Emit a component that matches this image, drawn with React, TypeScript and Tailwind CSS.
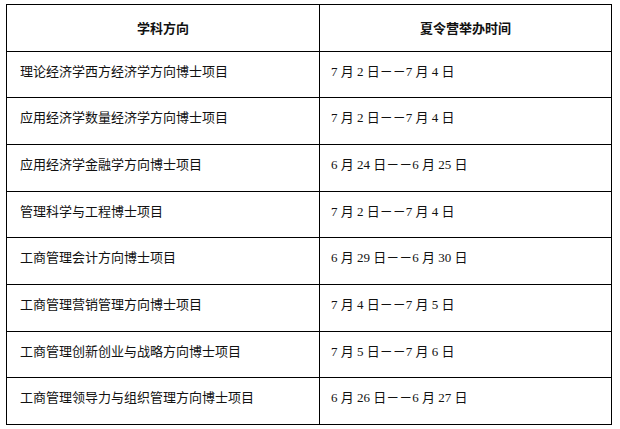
import React from "react"

const rows: { name: string; from: string; to: string; h: string }[] = [
  { name: "理论经济学西方经济学方向博士项目", from: "7 月 2 日", to: "7 月 4 日", h: "h-[46px]" },
  { name: "应用经济学数量经济学方向博士项目", from: "7 月 2 日", to: "7 月 4 日", h: "h-[47px]" },
  { name: "应用经济学金融学方向博士项目", from: "6 月 24 日", to: "6 月 25 日", h: "h-[47px]" },
  { name: "管理科学与工程博士项目", from: "7 月 2 日", to: "7 月 4 日", h: "h-[46px]" },
  { name: "工商管理会计方向博士项目", from: "6 月 29 日", to: "6 月 30 日", h: "h-[47px]" },
  { name: "工商管理营销管理方向博士项目", from: "7 月 4 日", to: "7 月 5 日", h: "h-[47px]" },
  { name: "工商管理创新创业与战略方向博士项目", from: "7 月 5 日", to: "7 月 6 日", h: "h-[46px]" },
  { name: "工商管理领导力与组织管理方向博士项目", from: "6 月 26 日", to: "6 月 27 日", h: "h-[47px]" },
]

const cjk = "font-['Noto_Sans_CJK_SC',sans-serif]"
const dateFont = "font-['Liberation_Serif','Noto_Sans_CJK_SC',serif]"

export default function App() {
  return (
    <div className="min-h-screen bg-white pl-[6px] pt-[4px] text-[#111]">
      <div className="grid w-[606px] grid-cols-[313px_292px] border-l border-t border-black">
        {/* Header */}
        <div
          className={`flex h-[47px] items-center justify-center border-b border-r border-black text-[13px] font-bold ${cjk}`}
        >
          学科方向
        </div>
        <div
          className={`flex h-[47px] items-center justify-center border-b border-r border-black text-[13px] font-bold ${cjk}`}
        >
          夏令营举办时间
        </div>

        {/* Body */}
        {rows.map((r) => (
          <React.Fragment key={r.name}>
            <div
              className={`${r.h} border-b border-r border-black pl-[13px] pt-[9px] text-[13px] leading-[20px] ${cjk}`}
            >
              {r.name}
            </div>
            <div
              className={`${r.h} border-b border-r border-black pl-[11px] pt-[9px] text-[13px] leading-[20px] ${dateFont}`}
            >
              {r.from}
              <span className={cjk}>－－</span>
              {r.to}
            </div>
          </React.Fragment>
        ))}
      </div>
    </div>
  )
}
